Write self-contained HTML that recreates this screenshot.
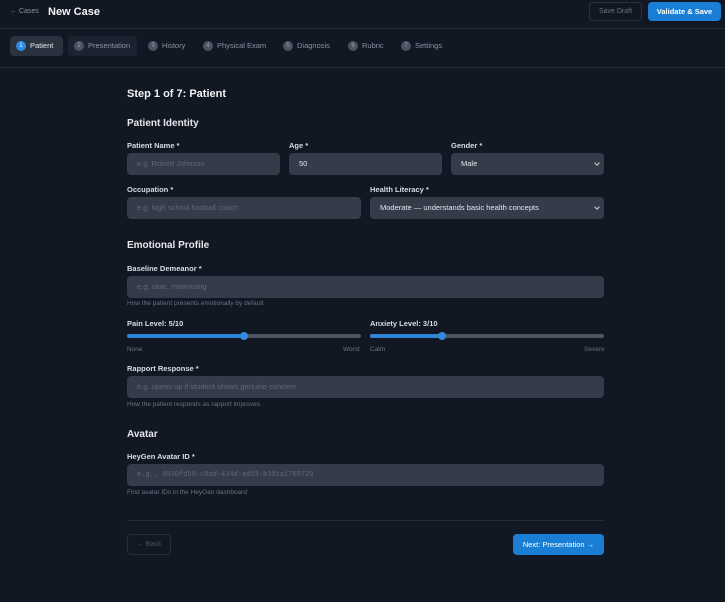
<!DOCTYPE html><html><head><style>
*{margin:0;padding:0;box-sizing:border-box}
body{width:725px;height:602px;background:#111723;font-family:"Liberation Sans",sans-serif;color:#e5e7eb;position:relative;overflow:hidden}
.a{position:absolute;white-space:nowrap}
.lbl{font-size:7.5px;font-weight:bold;color:#d8dce3}
.inp{position:absolute;background:#343c4a;border-radius:4px;height:22px;font-size:7.5px;color:#5f6878;padding:0 10px;line-height:22px}
.hint{font-size:6.5px;color:#6b7280}
.h{font-size:10px;font-weight:bold;color:#e5e7eb}
.tab{position:absolute;top:36px;height:20px;font-size:7.5px;color:#8a93a2;line-height:20px;padding-left:20px}
.tab i{position:absolute;left:6px;top:5px;width:10px;height:10px;border-radius:50%;background:#4b5361;color:#9ca3af;font-style:normal;font-size:6px;line-height:10px;text-align:center}
.sel:after{content:"";position:absolute;right:5px;top:8px;width:3px;height:3px;border-right:1.3px solid #ccc;border-bottom:1.3px solid #ccc;transform:rotate(45deg)}
.track{position:absolute;height:4px;border-radius:2px;background:#4b5260}
.fill{position:absolute;height:4px;border-radius:2px;background:#2f86d8}
.thumb{position:absolute;width:8px;height:8px;border-radius:50%;background:#2f8ae0}
</style></head><body>
<div class="a" style="left:10px;top:8px;font-size:7px;color:#8a93a2">← Cases</div>
<div class="a" style="left:48px;top:6px;font-size:11px;font-weight:bold;color:#f3f4f6">New Case</div>
<div class="a" style="left:589px;top:2px;width:53px;height:19px;border:1px solid #2a3140;border-radius:4px;font-size:7px;color:#6b7280;text-align:center;line-height:17px">Save Draft</div>
<div class="a" style="left:648px;top:2px;width:73px;height:19px;background:#1a7fd4;border-radius:4px;font-size:7.5px;font-weight:bold;color:#fff;text-align:center;line-height:19px">Validate &amp; Save</div>
<div class="a" style="left:0;top:28px;width:725px;height:1px;background:#222a37"></div>
<div class="tab" style="left:10px;width:53px;background:#2a3240;border-radius:4px;color:#e5e7eb"><i style="background:#2f8ae0;color:#fff">1</i>Patient</div>
<div class="tab" style="left:68px;width:69px;background:#1b2230;border-radius:4px"><i>2</i>Presentation</div>
<div class="tab" style="left:142px"><i>3</i>History</div>
<div class="tab" style="left:197px"><i>4</i>Physical Exam</div>
<div class="tab" style="left:277px"><i>5</i>Diagnosis</div>
<div class="tab" style="left:342px"><i>6</i>Rubric</div>
<div class="tab" style="left:395px"><i>7</i>Settings</div>
<div class="a" style="left:0;top:67px;width:725px;height:1px;background:#222a37"></div>

<div class="a" style="left:127px;top:88px;font-size:11px;font-weight:bold;color:#f3f4f6">Step 1 of 7: Patient</div>
<div class="a h" style="left:127px;top:118px">Patient Identity</div>
<div class="a lbl" style="left:127px;top:141px">Patient Name *</div>
<div class="a lbl" style="left:289px;top:141px">Age *</div>
<div class="a lbl" style="left:451px;top:141px">Gender *</div>
<div class="inp" style="left:127px;top:153px;width:153px">e.g. Robert Johnson</div>
<div class="inp" style="left:289px;top:153px;width:153px;color:#e5e7eb">50</div>
<div class="inp sel" style="left:451px;top:153px;width:153px;color:#e5e7eb">Male</div>
<div class="a lbl" style="left:127px;top:185px">Occupation *</div>
<div class="a lbl" style="left:370px;top:185px">Health Literacy *</div>
<div class="inp" style="left:127px;top:197px;width:234px">e.g. high school football coach</div>
<div class="inp sel" style="left:370px;top:197px;width:234px;color:#e5e7eb">Moderate — understands basic health concepts</div>

<div class="a h" style="left:127px;top:240px">Emotional Profile</div>
<div class="a lbl" style="left:127px;top:264px">Baseline Demeanor *</div>
<div class="inp" style="left:127px;top:276px;width:477px">e.g. stoic, minimizing</div>
<div class="a hint" style="left:127px;top:300px">How the patient presents emotionally by default</div>
<div class="a lbl" style="left:127px;top:319px">Pain Level: 5/10</div>
<div class="a lbl" style="left:370px;top:319px">Anxiety Level: 3/10</div>
<div class="track" style="left:127px;top:334px;width:234px"></div><div class="fill" style="left:127px;top:334px;width:117px"></div><div class="thumb" style="left:240px;top:332px"></div>
<div class="track" style="left:370px;top:334px;width:234px"></div><div class="fill" style="left:370px;top:334px;width:72px"></div><div class="thumb" style="left:438px;top:332px"></div>
<div class="a hint" style="left:127px;top:346px">None</div><div class="a hint" style="left:343px;top:346px">Worst</div>
<div class="a hint" style="left:370px;top:346px">Calm</div><div class="a hint" style="left:584px;top:346px">Severe</div>
<div class="a lbl" style="left:127px;top:364px">Rapport Response *</div>
<div class="inp" style="left:127px;top:376px;width:477px">e.g. opens up if student shows genuine concern</div>
<div class="a hint" style="left:127px;top:401px">How the patient responds as rapport improves</div>

<div class="a h" style="left:127px;top:429px">Avatar</div>
<div class="a lbl" style="left:127px;top:452px">HeyGen Avatar ID *</div>
<div class="inp" style="left:127px;top:464px;width:477px;font-family:'Liberation Mono',monospace;font-size:7px">e.g., 0930fd59-c8ad-434d-ad53-b391a1768720</div>
<div class="a hint" style="left:127px;top:489px">Find avatar IDs in the HeyGen dashboard</div>
<div class="a" style="left:127px;top:520px;width:477px;height:1px;background:#262d3a"></div>
<div class="a" style="left:127px;top:534px;width:44px;height:21px;border:1px solid #262d3a;border-radius:4px;font-size:7px;color:#4b5361;text-align:center;line-height:19px">← Back</div>
<div class="a" style="left:513px;top:534px;width:91px;height:21px;background:#1a7fd4;border-radius:4px;font-size:7.5px;color:#fff;text-align:center;line-height:21px">Next: Presentation →</div>
</body></html>
